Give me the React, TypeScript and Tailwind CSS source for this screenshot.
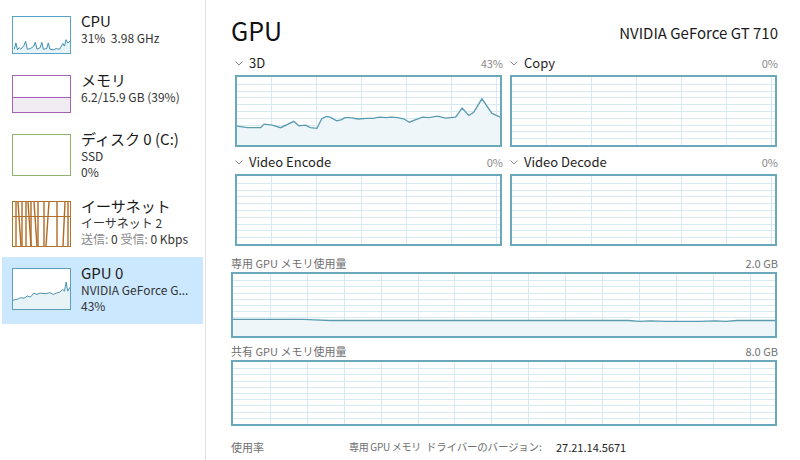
import React from "react";

type Pt = [number, number];

const FONT = { fontFamily: '"Noto Sans CJK JP", "Noto Sans", sans-serif' };

// 3D エンジンのグラフ (x, y は 0..1)
const DATA_3D: Pt[] = [
  [0, 0.722], [0.04, 0.745], [0.09, 0.745], [0.103, 0.693], [0.134, 0.708],
  [0.166, 0.745], [0.216, 0.651], [0.235, 0.717], [0.26, 0.708], [0.279, 0.745],
  [0.304, 0.755], [0.322, 0.613], [0.341, 0.58], [0.354, 0.59], [0.379, 0.646],
  [0.398, 0.627], [0.41, 0.599], [0.429, 0.599], [0.46, 0.618], [0.492, 0.608],
  [0.517, 0.608], [0.542, 0.59], [0.567, 0.599], [0.586, 0.59], [0.611, 0.599],
  [0.636, 0.618], [0.655, 0.665], [0.68, 0.627], [0.705, 0.59], [0.73, 0.599],
  [0.762, 0.575], [0.793, 0.604], [0.831, 0.59], [0.856, 0.458], [0.881, 0.566],
  [0.9, 0.519], [0.931, 0.321], [0.969, 0.533], [0.994, 0.58], [1, 0.59],
];

const DATA_DED: Pt[] = [
  [0, 0.73], [0.13, 0.73], [0.15, 0.74], [0.18, 0.75], [0.73, 0.75], [0.75, 0.765],
  [0.77, 0.755], [0.8, 0.765], [0.86, 0.765], [0.89, 0.755], [0.91, 0.765], [0.93, 0.75], [1, 0.75],
];

const CPU_THUMB: Pt[] = [
  [40, 150], [45, 130], [50, 152], [55, 145], [60, 150], [70, 138], [75, 125], [80, 150],
  [90, 148], [100, 140], [105, 128], [110, 150], [120, 145], [125, 128], [130, 150],
  [140, 148], [145, 130], [150, 150], [160, 152], [170, 148], [180, 150], [190, 132],
  [195, 140], [200, 120], [205, 130], [212, 125],
].map(([x, y]) => [(x - 36) / 176, (y - 48) / 114] as Pt);

const GPU_THUMB: Pt[] = [
  [36, 318], [50, 315], [60, 310], [70, 312], [80, 305], [90, 308], [100, 296], [110, 300],
  [120, 296], [135, 298], [150, 295], [160, 300], [170, 296], [180, 293], [190, 285],
  [195, 290], [200, 262], [205, 290], [212, 278],
].map(([x, y]) => [(x - 36) / 176, (y - 222) / 123] as Pt);

function Graph({
  w,
  h,
  color,
  grid,
  colW,
  colOff,
  rows = 10,
  data,
  fill,
  line,
}: {
  w: number;
  h: number;
  color: string;
  grid: string;
  colW: number;
  colOff: number;
  rows?: number;
  data?: Pt[];
  fill?: string;
  line?: string;
}) {
  const iw = w - 4;
  const ih = h - 4;
  const verts: number[] = [];
  for (let x = colOff; x < iw; x += colW) verts.push(Math.round(x) + 0.5);
  const hors: number[] = [];
  for (let i = 1; i < rows; i++) hors.push(Math.round((ih * i) / rows) + 0.5);
  const pts = data?.map(([x, y]) => `${(x * iw).toFixed(1)},${(y * ih).toFixed(1)}`).join(" ");
  return (
    <div className="border-2 bg-white" style={{ width: w, height: h, borderColor: color }}>
      <svg width={iw} height={ih} className="block">
        {hors.map((y) => (
          <line key={"h" + y} x1={0} x2={iw} y1={y} y2={y} stroke={grid} strokeWidth={1} />
        ))}
        {verts.map((x) => (
          <line key={"v" + x} x1={x} x2={x} y1={0} y2={ih} stroke={grid} strokeWidth={1} />
        ))}
        {pts && (
          <>
            <polygon points={`0,${ih} ${pts} ${iw},${ih}`} fill={fill} />
            <polyline points={pts} fill="none" stroke={line} strokeWidth={1.3} />
          </>
        )}
      </svg>
    </div>
  );
}

function Chevron() {
  return (
    <svg width="8" height="5" viewBox="0 0 8 5" className="mr-[6px] mt-[1px]">
      <path d="M0.5 0.5 L4 4 L7.5 0.5" fill="none" stroke="#8a8a8a" strokeWidth="1" />
    </svg>
  );
}

function Thumb({ kind, h }: { kind: string; h: number }) {
  const w = 59;
  if (kind === "cpu" || kind === "gpu") {
    const c = kind === "cpu" ? "#5aa3c6" : "#5d9fb6";
    const d = kind === "cpu" ? CPU_THUMB : GPU_THUMB;
    const iw = w - 2;
    const ih = h - 2;
    const pts = d.map(([x, y]) => `${(x * iw).toFixed(1)},${(y * ih).toFixed(1)}`).join(" ");
    return (
      <div className="border shrink-0 bg-white" style={{ width: w, height: h, borderColor: c }}>
        <svg width={iw} height={ih} className="block">
          <polygon points={`0,${ih} ${pts} ${iw},${ih}`} fill="#e8f3f8" />
          <polyline points={pts} fill="none" stroke={kind === "cpu" ? "#3f8fb5" : "#4c94ad"} strokeWidth={1} />
        </svg>
      </div>
    );
  }
  if (kind === "mem") {
    return (
      <div className="border border-[#a462b9] shrink-0 flex flex-col bg-white" style={{ width: w, height: h }}>
        <div className="flex-1" />
        <div className="h-[15px] border-t border-[#a462b9] bg-[#f1ecf3]" />
      </div>
    );
  }
  if (kind === "disk") {
    return <div className="border border-[#8fb56c] shrink-0 bg-white" style={{ width: w, height: h }} />;
  }
  // イーサネット
  const iw = w - 2;
  const ih = h - 2;
  const xs: Pt[] = [
    [3, 3], [5, 8], [9, 9], [13, 13], [15, 18], [18, 18], [21, 24], [25, 25],
    [31, 31], [36, 33], [44, 44], [52, 50], [55, 55],
  ];
  return (
    <div className="border border-[#b3732e] shrink-0 bg-white" style={{ width: w, height: h }}>
      <svg width={iw} height={ih} className="block">
        <line x1={0} x2={iw} y1={14.5} y2={14.5} stroke="#b3732e" strokeWidth={1} />
        {xs.map(([a, b], i) => (
          <line key={i} x1={a} x2={b} y1={0} y2={ih} stroke="#b06a22" strokeWidth={1.4} />
        ))}
      </svg>
    </div>
  );
}

function SideItem({
  kind,
  h,
  title,
  lines,
  selected,
}: {
  kind: string;
  h: number;
  title: string;
  lines: React.ReactNode[];
  selected?: boolean;
}) {
  return (
    <div className={`flex gap-[10px] pl-[10px] pt-[11px] pb-[10px] ${selected ? "bg-[#cce8ff]" : ""}`}>
      <Thumb kind={kind} h={h} />
      <div className="-mt-[5px] min-w-0">
        <div className="text-[15px] leading-[19px] text-[#1b1b1b] whitespace-nowrap">{title}</div>
        {lines.map((l, i) => (
          <div key={i} className="text-[12px] leading-[16px] text-[#333] whitespace-nowrap">
            {l}
          </div>
        ))}
      </div>
    </div>
  );
}

function Engine({ name, pct, data }: { name: string; pct: string; data?: Pt[] }) {
  return (
    <div>
      <div className="flex items-center justify-between h-[18px] mb-[3px]">
        <div className="flex items-center text-[13px] text-[#1e1e1e]">
          <Chevron />
          {name}
        </div>
        <span className="text-[11px] text-[#8a8a8a]">{pct}</span>
      </div>
      <Graph
        w={267}
        h={72}
        color="#6aa8bc"
        grid="#d7e9f1"
        colW={45}
        colOff={34}
        data={data}
        fill="#eef6fa"
        line="#5a9bb1"
      />
    </div>
  );
}

export default function App() {
  return (
    <div className="w-[800px] h-[460px] bg-white flex overflow-hidden" style={FONT}>
      {/* サイドバー */}
      <div className="w-[206px] shrink-0 border-r border-[#e3e3e3] px-[2px] pt-[5px]">
        <SideItem kind="cpu" h={38} title="CPU" lines={["31%\u00a0\u00a03.98 GHz"]} />
        <SideItem kind="mem" h={38} title="メモリ" lines={["6.2/15.9 GB (39%)"]} />
        <SideItem kind="disk" h={42} title="ディスク 0 (C:)" lines={["SSD", "0%"]} />
        <SideItem
          kind="eth"
          h={46}
          title="イーサネット"
          lines={[
            "イーサネット 2",
            <span>
              <span className="text-[#8a8a8a]">送信:</span> 0 <span className="text-[#8a8a8a]">受信:</span> 0 Kbps
            </span>,
          ]}
        />
        <SideItem kind="gpu" h={42} title="GPU 0" lines={["NVIDIA GeForce G...", "43%"]} selected />
      </div>

      {/* メイン */}
      <div className="flex-1 pl-[25px] pr-[22px] pt-[12px]">
        <div className="flex items-end justify-between h-[36px]">
          <span className="text-[25px] leading-[36px] text-[#111]">GPU</span>
          <span className="text-[15px] leading-[20px] mb-[5px] text-[#1b1b1b]">NVIDIA GeForce GT 710</span>
        </div>

        <div className="grid grid-cols-2 gap-x-[7px] gap-y-[6px] pl-[4px] mt-[6px]">
          <Engine name="3D" pct="43%" data={DATA_3D} />
          <Engine name="Copy" pct="0%" />
          <Engine name="Video Encode" pct="0%" />
          <Engine name="Video Decode" pct="0%" />
        </div>

        <div className="flex justify-between text-[11px] leading-[14px] text-[#707070] mt-[10px] mb-[2px]">
          <span>専用 GPU メモリ使用量</span>
          <span>2.0 GB</span>
        </div>
        <Graph w={546} h={66} color="#6aa8bc" grid="#d7e9f1" colW={36.9} colOff={36.9} data={DATA_DED} fill="#eef6fa" line="#5a9bb1" />

        <div className="flex justify-between text-[11px] leading-[14px] text-[#707070] mt-[6px] mb-[2px]">
          <span>共有 GPU メモリ使用量</span>
          <span>8.0 GB</span>
        </div>
        <Graph w={546} h={66} color="#6aa8bc" grid="#d7e9f1" colW={36.9} colOff={36.9} />

        <div className="flex text-[11px] leading-[14px] text-[#707070] mt-[14px] whitespace-nowrap">
          <span className="w-[118px] shrink-0">使用率</span>
          <span className="w-[77px] shrink-0 text-[10px] tracking-[-0.3px]">専用 GPU メモリ</span>
          <span className="w-[130px] shrink-0 text-[10.5px] tracking-[-0.2px]">ドライバーのバージョン:</span>
          <span className="text-[#222]">27.21.14.5671</span>
        </div>
      </div>
    </div>
  );
}
